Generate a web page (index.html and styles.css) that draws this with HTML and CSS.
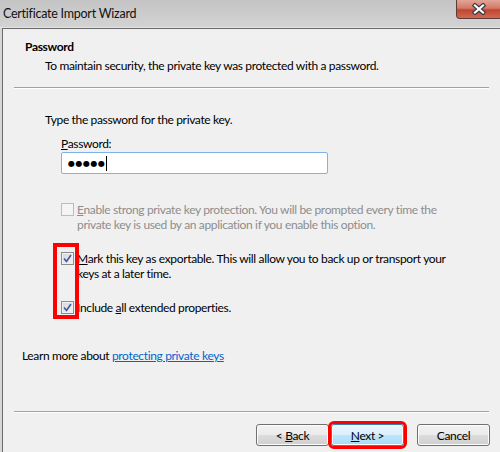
FILE: index.html
```html
<!DOCTYPE html>
<html lang="en">
<head>
    <meta charset="UTF-8">
    <title>Certificate Import Wizard</title>
    <link rel="stylesheet" href="styles.css">
</head>
<body>
    <div class="window">
        <div class="titlebar">
            <span class="title">Certificate Import Wizard</span>
            <div class="close-btn">
                <svg width="16" height="12" viewBox="0 0 16 12">
                    <path d="M4 2.5 L12 9.5 M12 2.5 L4 9.5" stroke="#3b3b4a" stroke-width="4.5" stroke-linecap="square"/>
                    <path d="M4 2.5 L12 9.5 M12 2.5 L4 9.5" stroke="#ffffff" stroke-width="2.2" stroke-linecap="square"/>
                </svg>
            </div>
        </div>

        <div class="panel">
            <div class="header">
                <div class="header-title">Password</div>
                <div class="header-sub">To maintain security, the private key was protected with a password.</div>
            </div>
            <div class="separator"></div>

            <div class="content">
                <p class="intro">Type the password for the private key.</p>
                <div class="field">
                    <label class="field-label"><u>P</u>assword:</label>
                    <div class="password-box">
                        <span class="dots">&#9679;&#9679;&#9679;&#9679;&#9679;</span><span class="caret"></span>
                    </div>
                </div>

                <div class="check-row disabled first">
                    <span class="checkbox"></span>
                    <span class="check-text"><u>E</u>nable strong private key protection. You will be prompted every time the<br>private key is used by an application if you enable this option.</span>
                </div>
                <div class="check-row">
                    <span class="checkbox checked">
                        <svg width="9" height="9" viewBox="0 0 9 9"><path d="M1 4.5 L3.5 7.5 L8 1" fill="none" stroke="#3d57a8" stroke-width="1.6"/></svg>
                    </span>
                    <span class="check-text"><u>M</u>ark this key as exportable. This will allow you to back up or transport your<br>keys at a later time.</span>
                </div>
                <div class="check-row">
                    <span class="checkbox checked">
                        <svg width="9" height="9" viewBox="0 0 9 9"><path d="M1 4.5 L3.5 7.5 L8 1" fill="none" stroke="#3d57a8" stroke-width="1.6"/></svg>
                    </span>
                    <span class="check-text">Include <u>a</u>ll extended properties.</span>
                </div>
                <!-- annotation around the checked boxes -->
                <div class="mark-box"></div>
            </div>

            <p class="learn-more">Learn more about <a href="#">protecting private keys</a></p>

            <div class="footer">
                <div class="separator"></div>
                <div class="buttons">
                    <button class="btn">&lt; <u>B</u>ack</button>
                    <button class="btn default"><u>N</u>ext &gt;</button>
                    <button class="btn cancel">Cancel</button>
                </div>
            </div>
        </div>
    </div>
</body>
</html>
```

FILE: styles.css
```css
/* Reset */
* {
    margin: 0;
    padding: 0;
    box-sizing: border-box;
}

body {
    width: 500px;
    height: 452px;
    overflow: hidden;
    background: #d6d6d6;
    font-family: 'Lato', 'Liberation Sans', sans-serif;
    font-size: 12px;
    letter-spacing: -0.35px;
    color: #000;
}

/* Window frame */
.window {
    display: flex;
    flex-direction: column;
    height: 452px;
}

.titlebar {
    height: 28px;
    display: flex;
    justify-content: space-between;
    align-items: flex-start;
    background: linear-gradient(#c4c4c4, #cdcdcd 60%, #d3d3d3);
    border-bottom: 1px solid #e4e4e4;
}

.title {
    padding: 6px 0 0 3px;
    font-size: 12.5px;
    letter-spacing: -0.25px;
    color: #111;
}

.close-btn {
    width: 46px;
    height: 19px;
    margin-right: -2px;
    display: flex;
    justify-content: center;
    align-items: center;
    background: linear-gradient(#e2a596, #d27a68 45%, #c14531 55%, #cf6b53);
    border: 1px solid #5b3b36;
    border-top: none;
    border-radius: 0 0 4px 4px;
}

/* Client area */
.panel {
    flex: 1;
    display: flex;
    flex-direction: column;
    margin-left: 2px;
    background: #f0f0f0;
    border-left: 1px solid #6b6b6b;
    border-top: 1px solid #6b6b6b;
    line-height: 15px;
}

.header {
    padding: 10px 0 0 22px;
}

.header-title {
    font-weight: bold;
}

.header-sub {
    margin: 4px 0 0 20px;
}

.separator {
    height: 2px;
    margin: 14px 11px 0 11px;
    border-top: 1px solid #a0a0a0;
    border-bottom: 1px solid #ffffff;
}

.content {
    padding-left: 42px;
    position: relative;
}

.intro {
    margin-top: 23px;
}

.field {
    margin: 9px 0 0 16px;
}

.field-label {
    display: block;
}

.password-box {
    width: 267px;
    height: 22px;
    margin-top: 1px;
    display: flex;
    align-items: center;
    padding-left: 6px;
    background: #fff;
    border: 1px solid #7eb4ea;
    border-radius: 2px;
}

.dots {
    font-family: 'DejaVu Sans', sans-serif;
    font-size: 8px;
    letter-spacing: 0.5px;
}

.caret {
    width: 1px;
    height: 15px;
    background: #000;
    margin-left: 1px;
}

/* Check boxes */
.check-row {
    display: flex;
    align-items: flex-start;
    margin: 19px 0 0 16px;
}

.check-row.first {
    margin-top: 28px;
}

.checkbox {
    width: 13px;
    height: 13px;
    margin: 1px 3px 0 0;
    flex-shrink: 0;
    display: flex;
    justify-content: center;
    align-items: center;
    border: 1px solid #8f8f8f;
    background: linear-gradient(135deg, #dcdcdc, #f8f8f8);
}

.checkbox.checked {
    border-color: #8c8c8c;
    background: linear-gradient(135deg, #d6d6d6, #f4f4f4);
    box-shadow: inset 0 0 0 1px #f0f0f0;
}

.disabled .checkbox {
    border-color: #bcbcbc;
    background: #f4f4f4;
}

.disabled .check-text {
    color: #8d8d8d;
}

.mark-box {
    position: absolute;
    left: 50px;
    top: 154px;
    width: 26px;
    height: 76px;
    border: 4px solid #ff0000;
}

.learn-more {
    margin: 33px 0 0 19px;
}

.learn-more a {
    color: #0066cc;
}

/* Footer with the wizard buttons */
.footer {
    margin-top: auto;
}

.buttons {
    display: flex;
    justify-content: flex-end;
    gap: 2px;
    padding: 11px 10px 6px 0;
}

.btn {
    width: 73px;
    height: 22px;
    font-family: inherit;
    font-size: 12px;
    letter-spacing: inherit;
    color: #000;
    background: linear-gradient(#f2f2f2, #ebebeb 50%, #dddddd 50%, #cfcfcf);
    border: 1px solid #707070;
    border-radius: 3px;
    box-shadow: inset 0 0 0 1px #fcfcfc;
}

.btn.default {
    background: linear-gradient(#eaf6fd, #d9f0fc 50%, #bee6fd 50%, #a7d9f5);
    border-color: #3c7fb1;
    outline: 3px solid #ff0000;
    outline-offset: 0;
}

.btn.cancel {
    margin-left: 11px;
}
```
